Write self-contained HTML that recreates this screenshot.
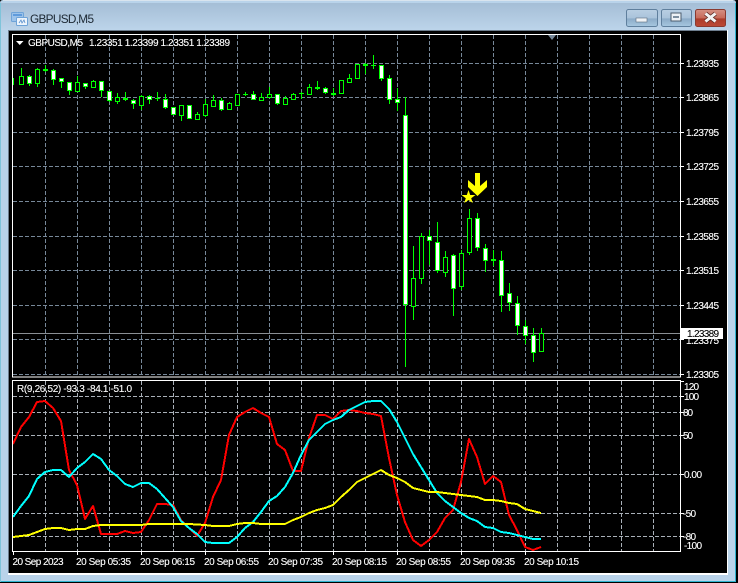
<!DOCTYPE html>
<html><head><meta charset="utf-8"><style>
html,body{margin:0;padding:0;background:#000;width:738px;height:583px;overflow:hidden}
svg{display:block}
text{font-family:"Liberation Sans",sans-serif;font-size:10px;fill:#fff;stroke:#fff;stroke-width:.12px}
</style></head><body>
<svg width="738" height="583" viewBox="0 0 738 583" xmlns="http://www.w3.org/2000/svg">
<defs>
<linearGradient id="tb" x1="0" y1="0" x2="0" y2="1"><stop offset="0" stop-color="#a5bed6"/><stop offset="1" stop-color="#bcd4ea"/></linearGradient>
<linearGradient id="bb" x1="0" y1="0" x2="0" y2="1"><stop offset="0" stop-color="#b9cfe3"/><stop offset=".5" stop-color="#a9c3db"/><stop offset=".55" stop-color="#8cabc8"/><stop offset="1" stop-color="#a7c8e0"/></linearGradient>
<linearGradient id="rb" x1="0" y1="0" x2="0" y2="1"><stop offset="0" stop-color="#d59184"/><stop offset=".5" stop-color="#c76a5a"/><stop offset=".55" stop-color="#ab3c2a"/><stop offset="1" stop-color="#bd4a36"/></linearGradient>
</defs>
<rect width="738" height="583" fill="#000"/>
<path d="M0 3Q0 0 3 0H733Q736 0 736 3V582H0Z" fill="#b9d3ea"/>
<path d="M1 3H735V30H1Z" fill="url(#tb)"/>
<path d="M0 581.500H735.500V3" fill="none" stroke="#2fb4cf"/>
<path d="M0.500 582V3" fill="none" stroke="#7fc4da"/>
<path d="M3 0.500H733" stroke="#d9e4ee" fill="none"/>
<rect x="8" y="30" width="720" height="545" fill="#fff"/>
<rect x="8" y="30" width="719" height="1" fill="#6d7d8d"/>
<rect x="8" y="30" width="1" height="543" fill="#6d7d8d"/>
<rect x="9" y="31" width="718" height="542" fill="#000"/>

<!-- title icon -->
<rect x="11.500" y="12.500" width="12" height="9" rx="1" fill="#9cc3ea" stroke="#6ea3d8"/>
<rect x="13" y="14" width="9" height="2" fill="#5f9bdc"/>
<rect x="16.500" y="17.500" width="11" height="8" rx="1" fill="#eef5fc" stroke="#6ea3d8"/>
<path d="M19 23l2-3 1 3 2-3 1 3" fill="none" stroke="#5b90cc" stroke-width=".8"/>
<text x="30" y="23" textLength="64" lengthAdjust="spacing" style="font-size:11.800px;fill:#1c2833;stroke:none">GBPUSD,M5</text>

<!-- window buttons -->
<rect x="626.500" y="9.500" width="31" height="17" rx="2" fill="url(#bb)" stroke="#5f7f9d"/>
<rect x="636" y="18" width="11" height="4" fill="#f0f3f6" stroke="#5a6b7c" stroke-width=".6"/>
<rect x="661.500" y="9.500" width="30" height="17" rx="2" fill="url(#bb)" stroke="#5f7f9d"/>
<rect x="671" y="13" width="10" height="8" fill="#eef2f6" stroke="#4c5d6e"/><rect x="673" y="16" width="6" height="2" fill="#7c8e9f"/>
<rect x="695.500" y="9.500" width="30" height="17" rx="2" fill="url(#rb)" stroke="#8a3a30"/>
<path d="M705.500 13.500L715.500 21.500M715.500 13.500L705.500 21.500" stroke="#5d2a24" stroke-width="4.400"/>
<path d="M705.500 13.500L715.500 21.500M715.500 13.500L705.500 21.500" stroke="#f3f3f3" stroke-width="3"/>

<!-- grid -->
<g fill="none" stroke="#778899" shape-rendering="crispEdges" stroke-dasharray="4 2">
<path d="M13 63.500H680M13 97.500H680M13 132.500H680M13 166.500H680M13 201.500H680M13 236.500H680M13 270.500H680M13 305.500H680M13 339.500H680M13 374.500H680"/>
<path d="M45.500 35V377M77.500 35V377M109.500 35V377M141.500 35V377M173.500 35V377M205.500 35V377M237.500 35V377M269.500 35V377M301.500 35V377M333.500 35V377M365.500 35V377M397.500 35V377M429.500 35V377M461.500 35V377M493.500 35V377M525.500 35V377M557.500 35V377M589.500 35V377M621.500 35V377M653.500 35V377"/>
</g>
<g fill="none" stroke="#a9b0b8" shape-rendering="crispEdges" stroke-dasharray="4 2">
<path d="M13 396.500H680M13 412.500H680M13 435.500H680M13 474.500H680M13 513.500H680M13 536.500H680"/>
<path d="M45.500 381V551M77.500 381V551M109.500 381V551M141.500 381V551M173.500 381V551M205.500 381V551M237.500 381V551M269.500 381V551M301.500 381V551M333.500 381V551M365.500 381V551M397.500 381V551M429.500 381V551M461.500 381V551M493.500 381V551M525.500 381V551M557.500 381V551M589.500 381V551M621.500 381V551M653.500 381V551"/>
</g>
<polygon points="548,35 556,35 552,40" fill="#778899"/>
<path d="M13 333.500H680" stroke="#8a8f94" shape-rendering="crispEdges"/>

<!-- wicks -->
<path shape-rendering="crispEdges" fill="none" stroke="#00ff00" d="M13.500 78V85M21.500 68V85M29.500 75V86M37.500 68V87M45.500 65V72M53.500 69V85M61.500 78V88M69.500 82V95M77.500 76V91M85.500 83V89M93.500 80V87M101.500 81V97M109.500 91V102M117.500 93V104M125.500 92V101M133.500 99V109M141.500 95V110M149.500 95V104M157.500 92V101M165.500 94V109M173.500 107V115M181.500 105V121M189.500 105V119M197.500 112V120M205.500 99V117M213.500 95V107M221.500 98V111M229.500 102V110M237.500 94V105M245.500 92V96M253.500 91V100M261.500 93V100M269.500 87V97M277.500 94V105M285.500 96V105M293.500 93V100M301.500 92V99M309.500 84V94M317.500 81V90M325.500 87V94M333.500 88V96M341.500 80V94M349.500 74V83M357.500 64V79M365.500 63V74M373.500 55V69M381.500 65V81M389.500 75V104M397.500 88V111M405.500 97V367M413.500 246V320M421.500 233V284M429.500 230V265M437.500 222V273M445.500 251V277M453.500 254V316M461.500 250V290M469.500 209V255M477.500 213V251M485.500 244V272M493.500 250V266M501.500 251V312M509.500 283V311M517.500 296V335M525.500 320V344M533.500 328V362M541.500 328V352"/>
<!-- flat bodies -->
<path fill="#00ff00" shape-rendering="crispEdges" d="M43 69h5v2h-5zM123 98h5v2h-5zM155 98h5v1h-5zM243 94h5v1h-5zM299 93h5v1h-5zM315 87h5v2h-5zM331 93h5v2h-5zM363 64h5v2h-5zM371 65h5v1h-5zM491 259h5v2h-5z"/>
<!-- hollow bodies -->
<path shape-rendering="crispEdges" fill="#000" stroke="#00ff00" d="M19.500 76.500h4V84.500h-4zM35.500 69.500h4V83.500h-4zM75.500 82.500h4V91.500h-4zM91.500 81.500h4V87.500h-4zM115.500 97.500h4V101.500h-4zM139.500 96.500h4V105.500h-4zM179.500 105.500h4V115.500h-4zM195.500 114.500h4V119.500h-4zM203.500 104.500h4V115.500h-4zM211.500 100.500h4V106.500h-4zM227.500 103.500h4V109.500h-4zM235.500 94.500h4V105.500h-4zM259.500 97.500h4V100.500h-4zM267.500 94.500h4V97.500h-4zM283.500 98.500h4V104.500h-4zM291.500 94.500h4V99.500h-4zM307.500 87.500h4V94.500h-4zM339.500 80.500h4V93.500h-4zM347.500 78.500h4V82.500h-4zM355.500 64.500h4V78.500h-4zM411.500 278.500h4V306.500h-4zM419.500 236.500h4V278.500h-4zM443.500 257.500h4V272.500h-4zM459.500 253.500h4V286.500h-4zM467.500 218.500h4V252.500h-4zM539.500 333.500h4V351.500h-4z"/>
<!-- white bodies -->
<path shape-rendering="crispEdges" fill="#fff" stroke="#00ff00" d="M27.500 76.500h4V83.500h-4zM51.500 70.500h4V79.500h-4zM59.500 78.500h4V81.500h-4zM67.500 82.500h4V90.500h-4zM83.500 83.500h4V86.500h-4zM99.500 81.500h4V90.500h-4zM107.500 91.500h4V100.500h-4zM131.500 100.500h4V103.500h-4zM147.500 96.500h4V99.500h-4zM163.500 99.500h4V107.500h-4zM171.500 107.500h4V114.500h-4zM187.500 105.500h4V118.500h-4zM219.500 100.500h4V109.500h-4zM251.500 94.500h4V99.500h-4zM275.500 94.500h4V103.500h-4zM323.500 88.500h4V92.500h-4zM379.500 65.500h4V78.500h-4zM387.500 78.500h4V99.500h-4zM395.500 99.500h4V102.500h-4zM403.500 115.500h4V304.500h-4zM427.500 236.500h4V240.500h-4zM435.500 242.500h4V270.500h-4zM451.500 255.500h4V288.500h-4zM475.500 218.500h4V247.500h-4zM483.500 248.500h4V260.500h-4zM499.500 260.500h4V295.500h-4zM507.500 293.500h4V302.500h-4zM515.500 303.500h4V325.500h-4zM523.500 326.500h4V335.500h-4zM531.500 335.500h4V352.500h-4z"/>

<!-- signal -->
<polygon points="475,173 480,173 480,186 487,180 487,187 477.500,196 468,187 468,180 475,186" fill="#ffff00"/>
<polygon points="468.500,190 470.200,195 475.500,195 471.200,198.200 472.800,203 468.500,200 464.200,203 465.800,198.200 461.500,195 466.800,195" fill="#ffff00"/>

<!-- indicator lines -->
<g fill="none" stroke-width="2" stroke-linejoin="round" style="shape-rendering:crispEdges">
<polyline stroke="#ff0000" points="13,444 21,427 29,417 37,402 45,401 53,408 61,421 69,470 77,485 85,519 93,506 101,534 109,534 117,534 125,531 133,533 141,532 149,520 157,504 165,504 173,505 181,520 189,528 197,536 205,523 213,497 221,480 229,435 237,417 245,412 253,408 261,413 269,417 277,444 285,450 293,471 301,471 309,438 317,415 325,415 333,419 341,411 349,410 357,411 365,413 373,414 381,416 389,458 397,495 405,522 413,540 421,546 429,540 437,532 445,518 453,510 461,482 469,439 477,457 485,484 493,476 501,482 509,515 517,530 525,547 533,550 541,547"/>
<polyline stroke="#00ffff" points="13,517 21,506 29,496 37,479 45,472 53,470 61,470 69,477 77,468 85,462 93,454 101,459 109,470 117,476 125,484 133,487 141,483 149,483 157,489 165,498 173,507 181,521 189,528 197,534 205,542 213,543 221,543 229,543 237,537 245,528 253,522 261,512 269,501 277,496 285,487 293,473 301,455 309,440 317,432 325,424 333,420 341,417 349,410 357,406 365,402 373,401 381,401 389,409 397,422 405,438 413,454 421,467 429,480 437,493 445,501 453,507 461,513 469,518 477,521 485,527 493,528 501,532 509,533 517,535 525,537 533,539 541,539"/>
<polyline stroke="#ffff00" points="13,537 21,536 29,535 37,532 45,529 53,528 61,528 69,530 77,529 85,529 93,526 101,525 141,525 149,524 189,524 205,525 213,526 221,526 229,526 237,524 245,523 253,523 261,524 285,524 293,520 301,517 309,513 317,510 325,508 333,505 341,497 349,490 357,482 365,478 373,474 381,470 389,475 397,478 405,482 413,488 421,490 429,492 437,492 445,493 453,494 461,495 469,496 477,497 485,500 493,500 501,501 509,503 517,504 525,509 533,511 541,513"/>
</g>

<!-- frames -->
<g fill="none" stroke="#fff" shape-rendering="crispEdges">
<rect x="12.500" y="34.500" width="668" height="342.500"/>
<rect x="12.500" y="380.500" width="668" height="171"/>
<path d="M681 63.500h3M681 97.500h3M681 132.500h3M681 166.500h3M681 201.500h3M681 236.500h3M681 270.500h3M681 305.500h3M681 339.500h3M681 374.500h3M681 396.500h3M681 412.500h3M681 435.500h3M681 474.500h3M681 513.500h3M681 536.500h3M681 381.500h3M13.500 552v3M77.500 552v3M141.500 552v3M205.500 552v3M269.500 552v3M333.500 552v3M397.500 552v3M461.500 552v3M525.500 552v3"/>
</g>

<!-- header -->
<polygon points="16,41 23.500,41 19.750,45" fill="#fff"/>
<text x="28" y="46" textLength="55">GBPUSD,M5</text>
<text x="89" y="46" textLength="141">1.23351 1.23399 1.23351 1.23389</text>
<text x="17" y="392" textLength="115">R(9,26,52) -93.3 -84.1 -51.0</text>

<!-- price axis -->
<text x="686" y="67" textLength="33">1.23935</text>
<text x="686" y="101" textLength="33">1.23865</text>
<text x="686" y="136" textLength="33">1.23795</text>
<text x="686" y="170" textLength="33">1.23725</text>
<text x="686" y="205" textLength="33">1.23655</text>
<text x="686" y="240" textLength="33">1.23585</text>
<text x="686" y="274" textLength="33">1.23515</text>
<text x="686" y="309" textLength="33">1.23445</text>
<text x="686" y="344" textLength="33">1.23375</text>
<text x="686" y="378" textLength="33">1.23305</text>
<rect x="681" y="328" width="42" height="11" fill="#fff"/>
<text x="687" y="337" textLength="32" style="fill:#000;stroke:#000">1.23389</text>

<!-- indicator axis -->
<text x="684" y="390" textLength="15">120</text>
<text x="684" y="400" textLength="15">100</text>
<text x="683" y="416" textLength="10">80</text>
<text x="683" y="439" textLength="10">50</text>
<text x="684" y="478" textLength="18">0.00</text>
<text x="683" y="517" textLength="13">-50</text>
<text x="683" y="540" textLength="13">-80</text>
<text x="684" y="549" textLength="18">-100</text>

<!-- time axis -->
<text x="12.500" y="565" textLength="51">20 Sep 2023</text>
<text x="76" y="565" textLength="55">20 Sep 05:35</text>
<text x="140" y="565" textLength="55">20 Sep 06:15</text>
<text x="204" y="565" textLength="55">20 Sep 06:55</text>
<text x="268" y="565" textLength="55">20 Sep 07:35</text>
<text x="332" y="565" textLength="55">20 Sep 08:15</text>
<text x="396" y="565" textLength="55">20 Sep 08:55</text>
<text x="460" y="565" textLength="55">20 Sep 09:35</text>
<text x="524" y="565" textLength="55">20 Sep 10:15</text>
</svg>
</body></html>
